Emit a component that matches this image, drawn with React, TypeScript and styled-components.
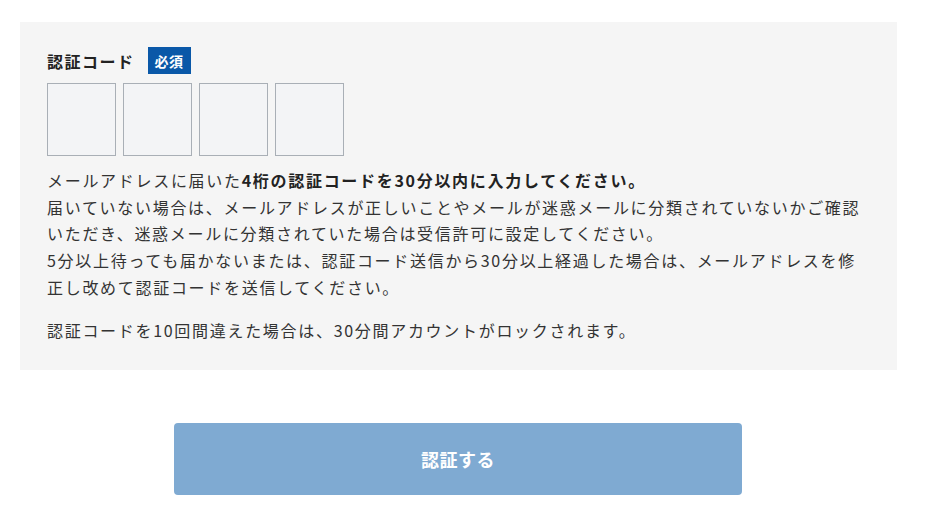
import { createGlobalStyle } from 'styled-components'
import styled from 'styled-components'

const GlobalStyle = createGlobalStyle`
  html, body {
    margin: 0;
    padding: 0;
    background: #fff;
  }
  body {
    font-family: "Noto Sans CJK JP", "Noto Sans", sans-serif;
    color: #333;
  }
`

const Page = styled.main`
  padding: 22px 29px 0 20px;
`

const Panel = styled.section`
  background: #f5f5f5;
  padding: 25px 27px 27px;
`

const LabelRow = styled.div`
  display: flex;
  align-items: center;
  gap: 13px;
  height: 27px;
`

const Label = styled.span`
  font-size: 16px;
  font-weight: 700;
  letter-spacing: 1.5px;
  color: #222;
`

const Badge = styled.span`
  display: inline-flex;
  align-items: center;
  justify-content: center;
  height: 27px;
  padding: 0 7px;
  background: #0a58a8;
  color: #fff;
  font-size: 14px;
  font-weight: 700;
  letter-spacing: 0.5px;
`

const CodeRow = styled.div`
  display: flex;
  gap: 7px;
  margin-top: 9px;
`

const CodeBox = styled.input`
  box-sizing: border-box;
  width: 69px;
  height: 73px;
  border: 1px solid #a9afb6;
  border-radius: 0;
  background: #f3f4f6;
  font-size: 28px;
  text-align: center;
  outline: none;
`

const Notes = styled.p`
  margin: 11px 0 0;
  font-size: 16px;
  line-height: 26.7px;
  letter-spacing: 1.7px;
  color: #333;

  & + & {
    margin-top: 16px;
  }

  strong {
    font-weight: 700;
    color: #222;
  }
`

const Actions = styled.div`
  display: flex;
  justify-content: center;
  margin-top: 53px;
  padding-right: 1px;
`

const SubmitButton = styled.button`
  width: 568px;
  height: 72px;
  border: none;
  border-radius: 4px;
  background: #7faad2;
  color: #fff;
  font-family: "Noto Sans CJK JP", "Noto Sans", sans-serif;
  font-size: 18px;
  font-weight: 700;
  letter-spacing: 0.5px;
  cursor: not-allowed;
`

const App = () => {
  const digits = [0, 1, 2, 3]

  return (
    <>
      <GlobalStyle />
      <Page>
        <Panel>
          <LabelRow>
            <Label>認証コード</Label>
            <Badge>必須</Badge>
          </LabelRow>
          <CodeRow>
            {digits.map((d) => (
              <CodeBox key={d} type="text" inputMode="numeric" maxLength={1} aria-label={`認証コード${d + 1}桁目`} />
            ))}
          </CodeRow>
          <Notes>
            メールアドレスに届いた<strong>4桁の認証コードを30分以内に入力してください。</strong>
            <br />
            届いていない場合は、メールアドレスが正しいことやメールが迷惑メールに分類されていないかご確認
            <br />
            いただき、迷惑メールに分類されていた場合は受信許可に設定してください。
            <br />
            5分以上待っても届かないまたは、認証コード送信から30分以上経過した場合は、メールアドレスを修
            <br />
            正し改めて認証コードを送信してください。
          </Notes>
          <Notes>認証コードを10回間違えた場合は、30分間アカウントがロックされます。</Notes>
        </Panel>
        <Actions>
          <SubmitButton type="button" disabled>認証する</SubmitButton>
        </Actions>
      </Page>
    </>
  )
}

export default App
